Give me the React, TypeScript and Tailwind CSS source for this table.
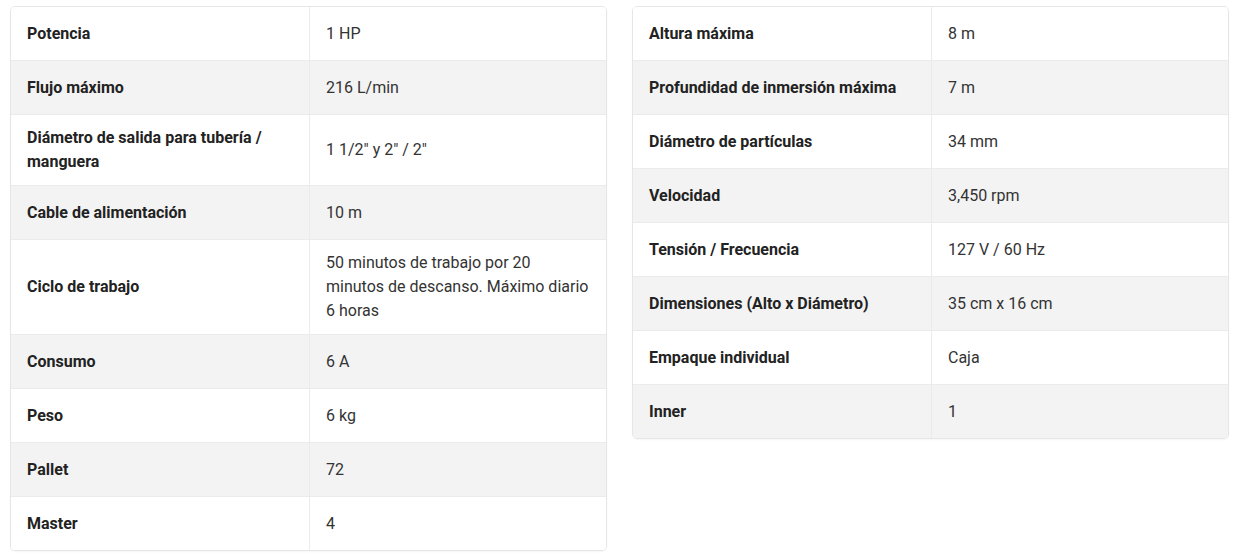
import React from "react";

const left: [string, string][] = [
  ["Potencia", "1 HP"],
  ["Flujo máximo", "216 L/min"],
  ["Diámetro de salida para tubería / manguera", "1 1/2\" y 2\" / 2\""],
  ["Cable de alimentación", "10 m"],
  ["Ciclo de trabajo", "50 minutos de trabajo por 20 minutos de descanso. Máximo diario 6 horas"],
  ["Consumo", "6 A"],
  ["Peso", "6 kg"],
  ["Pallet", "72"],
  ["Master", "4"],
];

const right: [string, string][] = [
  ["Altura máxima", "8 m"],
  ["Profundidad de inmersión máxima", "7 m"],
  ["Diámetro de partículas", "34 mm"],
  ["Velocidad", "3,450 rpm"],
  ["Tensión / Frecuencia", "127 V / 60 Hz"],
  ["Dimensiones (Alto x Diámetro)", "35 cm x 16 cm"],
  ["Empaque individual", "Caja"],
  ["Inner", "1"],
];

function Table({ rows }: { rows: [string, string][] }) {
  return (
    <div className="w-[597px] border border-[#e6e6e6] rounded-[5px] overflow-hidden shadow-[0_1px_2px_rgba(0,0,0,0.04)]">
      {rows.map(([k, v], i) => (
        <div
          key={k}
          className={`flex ${i > 0 ? "border-t border-[#ebebeb] min-h-[54px]" : "min-h-[53px]"} ${i % 2 === 1 ? "bg-[#f3f3f3]" : "bg-white"}`}
        >
          <div className="w-[299px] shrink-0 border-r border-[#ebebeb] px-4 py-[11px] flex items-center font-bold text-[16px] leading-[24px] text-[#222]">
            <span>{k}</span>
          </div>
          <div className="flex-1 px-4 py-[11px] flex items-center text-[16px] leading-[24px] text-[#333]">
            <span>{v}</span>
          </div>
        </div>
      ))}
    </div>
  );
}

export default function App() {
  return (
    <div className="bg-white w-[1241px] h-[555px] pl-[10px] pt-[6px] flex items-start gap-[25px]" style={{ fontFamily: "Roboto, 'Noto Sans', sans-serif" }}>
      <Table rows={left} />
      <Table rows={right} />
    </div>
  );
}
